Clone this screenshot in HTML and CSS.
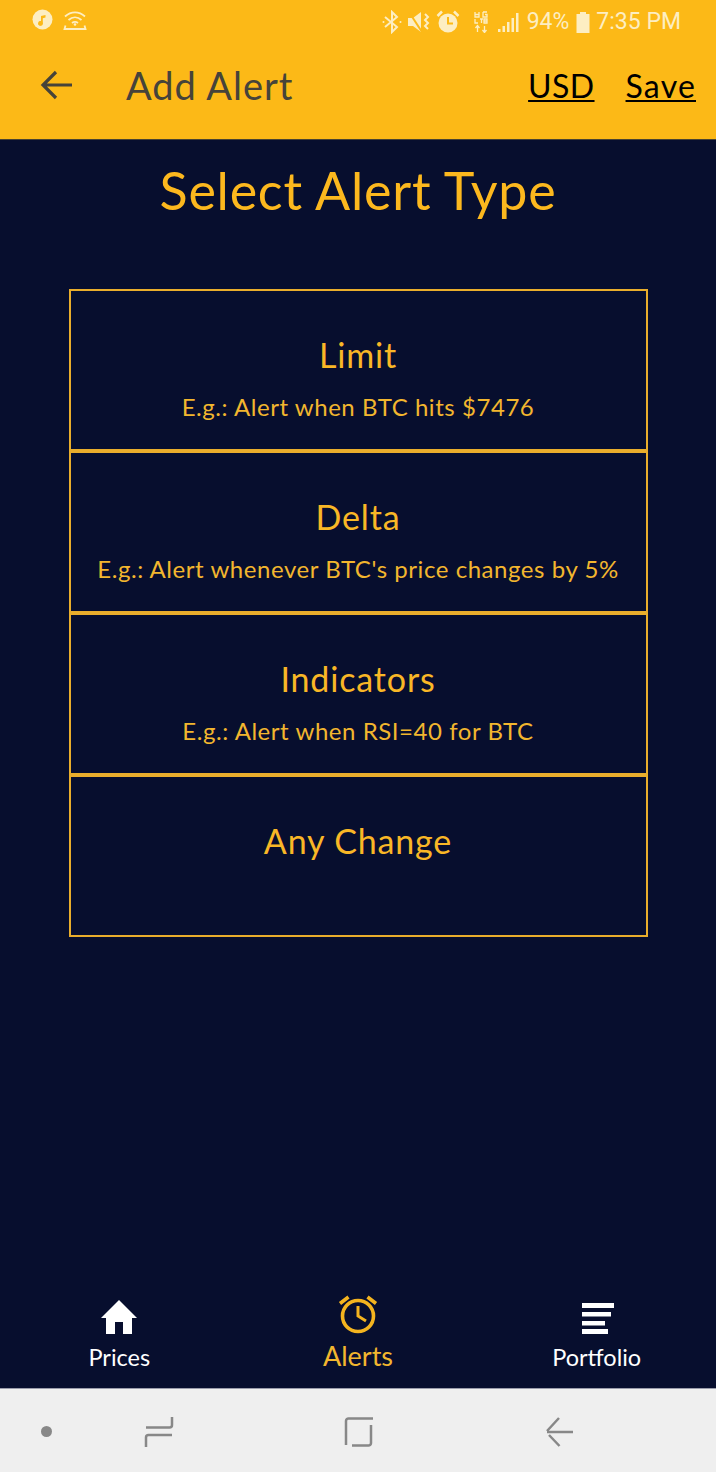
FILE: index.html
```html
<!DOCTYPE html>
<html lang="en">
<head>
<meta charset="utf-8">
<title>Add Alert</title>
<link rel="stylesheet" href="styles.css">
</head>
<body>
<div class="app">
  <header class="header">
    <div class="status">
      <div class="status-left">
        <svg class="ic" width="21" height="21" viewBox="0 0 21 21"><circle cx="10.5" cy="10.5" r="10" fill="#fdeec2"/><path d="M9 14.5V7l4.500-1v2.500L10.800 9.200V14.500a2.300 2.200 0 1 1-1.800-2.100" fill="#fcb917"/><circle cx="8.500" cy="14.300" r="2.200" fill="#fcb917"/></svg>
        <svg class="ic" width="24" height="21" viewBox="0 0 24 21" fill="none" stroke="#fdeec2" stroke-width="1.800"><path d="M2 7.500C8 2 16 2 22 7.500M5.500 11c4-3.500 9-3.500 13 0M9 14c2-1.500 4-1.500 6 0"/><path d="M2.500 16.500 1.500 20h21l-1-3.500"/><circle cx="12" cy="15.500" r="1.300" fill="#fdeec2" stroke="none"/></svg>
      </div>
      <div class="status-right">
        <svg class="ic" width="20" height="24" viewBox="0 0 20 24" fill="none" stroke="#fdeec2" stroke-width="2"><path d="M3 7l12 10-5 5V2l5 5L3 17"/><circle cx="1.500" cy="12" r="1" fill="#fdeec2" stroke="none"/><circle cx="18.500" cy="12" r="1" fill="#fdeec2" stroke="none"/></svg>
        <svg class="ic" width="24" height="22" viewBox="0 0 24 22"><path d="M1 7h5l8-6v20l-8-6H1z" fill="#fdeec2"/><path d="M2 1l13 20" stroke="#fcb917" stroke-width="2"/><path d="M18 3l3 3-3 3 3 3-3 3 3 3" fill="none" stroke="#fdeec2" stroke-width="2"/></svg>
        <svg class="ic" width="24" height="24" viewBox="0 0 24 24"><circle cx="12" cy="13" r="9.500" fill="#fdeec2"/><path d="M12 7v6.500h5" fill="none" stroke="#fcb917" stroke-width="2"/><path d="M1.500 6 6 1.500M22.500 6 18 1.500" stroke="#fdeec2" stroke-width="2.500"/></svg>
        <svg class="ic net" width="14" height="22" viewBox="0 0 14 22" fill="none" stroke="#fdeec2" stroke-width="1.300"><path d="M1 1v5h4V1M5 3.500H1M9 1h4M9 1v5h4V3.500h-2M1 8v4h3M6 8h3M7.500 8v4M10 8h3v4h-3zM10 10h3M3.500 21v-6M1.500 17l2-2.500 2 2.500M10.500 15v6M8.500 19l2 2.500 2-2.500"/></svg>
        <svg class="ic sig" width="21" height="21" viewBox="0 0 21 21" fill="#fdeec2"><rect x="0" y="17" width="2.500" height="3"/><rect x="4.500" y="14" width="2.500" height="6"/><rect x="9" y="10" width="2.500" height="10"/><rect x="13.500" y="6" width="2.500" height="14"/><rect x="18" y="1" width="2.500" height="19"/></svg>
        <span class="status-text pct">94%</span>
        <svg class="ic" width="14" height="21" viewBox="0 0 14 21"><path d="M4 0h6v2h3.500v19H.5V2H4z" fill="#fdeec2"/></svg>
        <span class="status-text time">7:35 PM</span>
      </div>
    </div>
    <div class="toolbar">
      <svg class="back" width="32" height="30" viewBox="0 0 32 30" fill="none" stroke="#46433a" stroke-width="3.200"><path d="M32 15H3M16 2 3 15l13 13"/></svg>
      <h1 class="title">Add Alert</h1>
      <a class="action action-usd">USD</a>
      <a class="action action-save">Save</a>
    </div>
  </header>
  <main class="main">
    <h2 class="heading">Select Alert Type</h2>
    <div class="list">
      <div class="item"><div class="item-name">Limit</div><div class="item-desc">E.g.: Alert when BTC hits $7476</div></div>
      <div class="item"><div class="item-name">Delta</div><div class="item-desc">E.g.: Alert whenever BTC's price changes by 5%</div></div>
      <div class="item"><div class="item-name">Indicators</div><div class="item-desc">E.g.: Alert when RSI=40 for BTC</div></div>
      <div class="item"><div class="item-name">Any Change</div><div class="item-desc">&nbsp;</div></div>
    </div>
  </main>
  <nav class="tabs">
    <div class="tab">
      <svg class="tab-icon tab-icon-home" width="38" height="36" viewBox="0 0 38 36"><path d="M19 1 37 19h-5v16H23V23h-8v12H6V19H1z" fill="#fff"/></svg>
      <span class="tab-label">Prices</span>
    </div>
    <div class="tab tab-active">
      <svg class="tab-icon" width="40" height="40" viewBox="0 0 40 40" fill="none" stroke="#f4b41f" stroke-width="3.600"><circle cx="20" cy="22" r="15.500"/><path d="M20 12v10l8 5" stroke-width="3"/><path d="M2 9.500 10.500 3M38 9.500 29.500 3" stroke-width="3.600"/></svg>
      <span class="tab-label">Alerts</span>
    </div>
    <div class="tab">
      <svg class="tab-icon tab-icon-list" width="32" height="31" viewBox="0 0 32 31" fill="#fff"><rect x="0" y="0" width="32" height="5"/><rect x="0" y="9" width="29" height="4.500"/><rect x="0" y="18" width="23" height="4.500"/><rect x="0" y="26" width="26" height="5"/></svg>
      <span class="tab-label">Portfolio</span>
    </div>
  </nav>
  <div class="sysnav">
    <span class="dot"></span>
    <svg width="30" height="32" viewBox="0 0 30 32" fill="none" stroke="#888" stroke-width="2.500"><path d="M28 1v8a2.500 2.500 0 0 1-2.500 2.500H2M28 19H4.500A2.500 2.500 0 0 0 2 21.500V31"/></svg>
    <svg width="30" height="30" viewBox="0 0 30 30" fill="none" stroke="#888" stroke-width="2.500"><path d="M2 28V4a2.500 2.500 0 0 1 2.500-2.500H29M8 28.500h16.500A2.500 2.500 0 0 0 27 26V8"/></svg>
    <svg width="28" height="30" viewBox="0 0 28 30" fill="none" stroke="#888" stroke-width="2.500"><path d="M28 15H2M14 1 2 14M4 18l10.500 11"/></svg>
  </div>
</div>
</body>
</html>
```
FILE: styles.css
```css
* { box-sizing: border-box; margin: 0; padding: 0; }
html, body { width: 716px; height: 1472px; overflow: hidden; }
body { font-family: Lato, "Open Sans", sans-serif; background: #070e2e; }
.app { width: 716px; height: 1472px; display: flex; flex-direction: column; }
.header { height: 140px; background: #fcb917; border-bottom: 1px solid #4a4430; }
.status { height: 42px; padding: 10px 35px 0 32px; display: flex; justify-content: space-between; align-items: flex-start; }
.status-left, .status-right { display: flex; align-items: center; }
.status-left { gap: 10px; margin-top: -1px; }
.status-right { gap: 5px; height: 24px; }
.ic { display: block; flex: none; }
.net { margin-left: 9px; }
.sig { margin-left: 5px; }
.status-text { font-family: Roboto, sans-serif; font-size: 23px; line-height: 24px; color: #fdeec2; }
.pct { margin: 0 2px 0 3px; }
.time { margin-left: 1px; }
.toolbar { height: 88px; display: flex; align-items: center; padding: 1px 20px 5px 40px; }
.back { flex: none; margin-top: 2px; }
.title { font-size: 38px; font-weight: 400; color: #46433a; margin-left: 54px; letter-spacing: 1px; flex: 1; line-height: 44px; margin-top: 2px; }
.action { font-size: 32px; color: #000; text-decoration: underline; text-decoration-thickness: 2px; text-underline-offset: 2px; line-height: 40px; margin-top: 4px; }
.action-usd { margin-right: 31px; letter-spacing: 0.4px; }
.action-save { letter-spacing: 1.2px; }
.main { flex: 1; display: flex; flex-direction: column; align-items: center; }
.heading { font-size: 52px; font-weight: 400; color: #fcb81e; line-height: 60px; margin-top: 20px; letter-spacing: 0.75px; }
.list { width: 579px; margin-top: 69px; display: flex; flex-direction: column; }
.item { height: 162px; border: 2px solid #e9ad2c; display: flex; flex-direction: column; align-items: center; padding-top: 43px; }
.item + .item { margin-top: -1px; border-top-width: 3px; height: 163px; padding-top: 43px; }
.item-name { font-size: 34px; line-height: 42px; color: #f9b726; letter-spacing: 0.85px; }
.item-desc { font-size: 24px; line-height: 30px; color: #f2b62e; margin-top: 16px; letter-spacing: 0.55px; }
.tabs { height: 114px; display: flex; border-bottom: 1px solid #9a9cab; }
.tab { flex: 1; display: flex; flex-direction: column; align-items: center; justify-content: flex-end; padding-bottom: 16px; color: #fff; }
.tab-icon { display: block; margin-bottom: 8px; }
.tab-icon-home { margin-bottom: 7px; }
.tab-icon-list { margin-left: 2px; }
.tab-active { color: #f2b62e; padding-bottom: 17px; }
.tab-active .tab-icon { margin-bottom: 7px; }
.tab-label { font-size: 23.5px; line-height: 30px; }
.tab-active .tab-label { font-size: 27px; }
.sysnav { height: 83px; background: #efefef; display: grid; grid-template-columns: 92px 134px 266px 134px; align-items: center; justify-items: center; padding-top: 2px; }
.dot { width: 11px; height: 11px; border-radius: 50%; background: #888; }
```
